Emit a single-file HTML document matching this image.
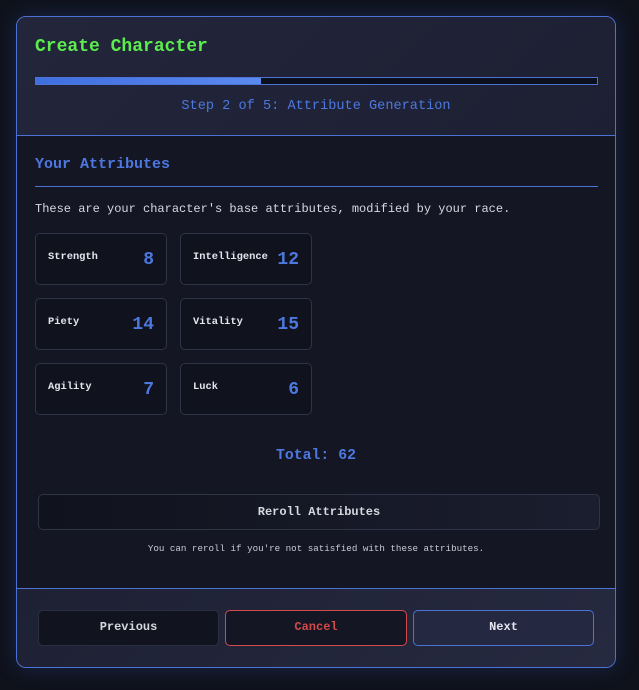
<!DOCTYPE html>
<html><head><style>
*{box-sizing:border-box;margin:0;padding:0}
body{width:639px;height:690px;background:#0f121b;font-family:"Liberation Mono","DejaVu Sans Mono",monospace;position:relative;overflow:hidden}
.card{position:absolute;left:16px;top:16px;width:600px;height:652px;border:1px solid #4d72d6;border-radius:10px;overflow:hidden;background:#141624;box-shadow:0 0 22px rgba(60,100,220,.25)}
.hdr{position:absolute;left:0;top:0;width:100%;height:119px;background:linear-gradient(135deg,#23263b,#1d2033);border-bottom:1px solid #4d72d6}
.ftr{position:absolute;left:0;top:571px;width:100%;height:81px;background:linear-gradient(135deg,#1e2134,#262a40);border-top:1px solid #4d72d6}
.abs{position:absolute}
.title{left:18px;top:20px;color:#5cec4e;font-size:18px;font-weight:bold}
.bar{left:18px;top:60px;width:563px;height:8px;border:1px solid #4d72d6;background:#0c0f1c}
.bar div{width:225px;height:100%;background:linear-gradient(90deg,#3f6ee0,#5b8af0)}
.step{left:0;width:100%;top:82px;text-align:center;color:#4d78e0;font-size:13.6px}
.sec{left:18px;top:139px;color:#4d78e0;font-size:15px;font-weight:bold}
.line{left:18px;top:169px;width:563px;height:1px;background:#4d72d6}
.desc{left:18px;top:185px;color:#d6d8e0;font-size:12px}
.box{width:132px;height:52px;border:1px solid #2f3346;border-radius:5px;background:#10121d}
.box .l{position:absolute;left:12px;top:17px;color:#e4e6ee;font-size:10.4px;font-weight:bold}
.box .n{position:absolute;right:12px;top:16px;color:#4d78e0;font-size:18px;font-weight:bold}
.total{left:0;width:100%;top:431px;text-align:center;color:#4d78e0;font-size:14.8px;font-weight:bold}
.btn{border-radius:5px;text-align:center;font-size:12px;font-weight:bold;line-height:33px}
.note{left:0;width:100%;top:526px;text-align:center;color:#c9cbd4;font-size:9.2px}
</style></head><body>
<div class="card">
<div class="hdr"></div>
<div class="ftr"></div>
<div class="abs title">Create Character</div>
<div class="abs bar"><div></div></div>
<div class="abs step">Step 2 of 5: Attribute Generation</div>
<div class="abs sec">Your Attributes</div>
<div class="abs line"></div>
<div class="abs desc">These are your character's base attributes, modified by your race.</div>
<div class="abs box" style="left:18px;top:216px"><span class="l">Strength</span><span class="n">8</span></div>
<div class="abs box" style="left:163px;top:216px"><span class="l">Intelligence</span><span class="n">12</span></div>
<div class="abs box" style="left:18px;top:281px"><span class="l">Piety</span><span class="n">14</span></div>
<div class="abs box" style="left:163px;top:281px"><span class="l">Vitality</span><span class="n">15</span></div>
<div class="abs box" style="left:18px;top:346px"><span class="l">Agility</span><span class="n">7</span></div>
<div class="abs box" style="left:163px;top:346px"><span class="l">Luck</span><span class="n">6</span></div>
<div class="abs total">Total: 62</div>
<div class="abs btn" style="left:21px;top:477px;width:562px;height:36px;border:1px solid #2f3346;background:linear-gradient(90deg,#10121d,#1b1e2e);color:#d6d8e0;line-height:34px">Reroll Attributes</div>
<div class="abs note">You can reroll if you're not satisfied with these attributes.</div>
<div class="abs btn" style="left:21px;top:593px;width:181px;height:36px;border:1px solid #2a2e40;background:#11131e;color:#d6d8e0">Previous</div>
<div class="abs btn" style="left:208px;top:593px;width:182px;height:36px;border:1px solid #d24a4a;background:#141624;color:#d24a4a">Cancel</div>
<div class="abs btn" style="left:396px;top:593px;width:181px;height:36px;border:1px solid #4d72d6;background:#242841;color:#e4e6ee">Next</div>
</div>
</body></html>
